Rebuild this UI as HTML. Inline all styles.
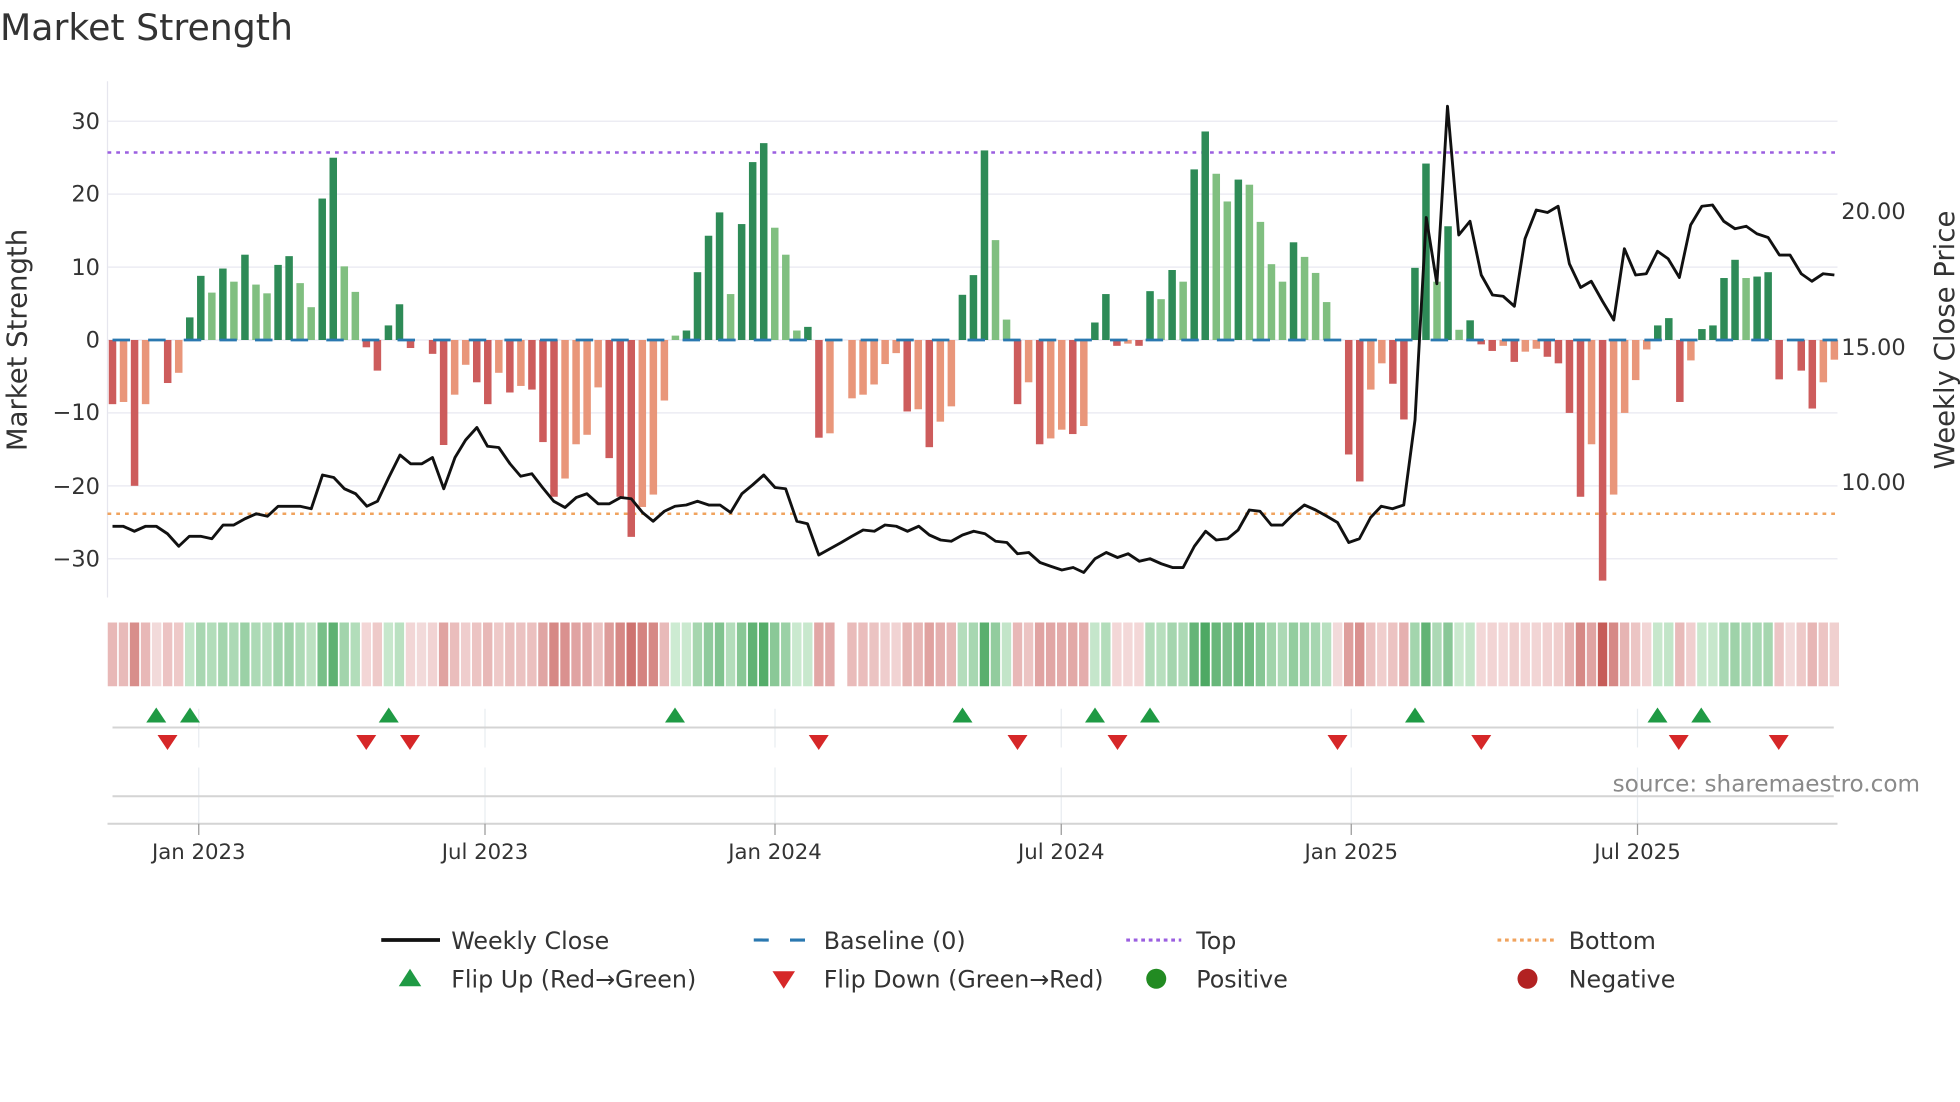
<!DOCTYPE html>
<html><head><meta charset="utf-8"><style>
html,body{margin:0;padding:0;background:#fff;width:1960px;height:1102px;overflow:hidden}
svg{display:block}
text{font-family:"DejaVu Sans","Liberation Sans",sans-serif;fill:#333}
</style></head><body>
<svg id="s" width="1960" height="1102" viewBox="0 0 1568 881.6" xmlns="http://www.w3.org/2000/svg">
<rect width="1568" height="881.6" fill="#fff"/>
<text x="0" y="32" font-size="29" fill="#333">Market Strength</text>
<g id="grid"></g>
<line x1="86" y1="65" x2="86" y2="478" stroke="#e6e6ee" stroke-width="1"/>
<g font-size="18" text-anchor="end">
<text x="80" y="103">30</text><text x="80" y="161">20</text><text x="80" y="220">10</text>
<text x="80" y="278">0</text><text x="80" y="336">−10</text><text x="80" y="395">−20</text><text x="80" y="453">−30</text>
</g>
<g font-size="18">
<text x="1473" y="175">20.00</text><text x="1473" y="284">15.00</text><text x="1473" y="392">10.00</text>
</g>
<text transform="translate(21,272) rotate(-90)" font-size="22" text-anchor="middle">Market Strength</text>
<text transform="translate(1563,272) rotate(-90)" font-size="22" text-anchor="middle">Weekly Close Price</text>
<line x1="86" y1="122" x2="1470" y2="122" stroke="#9b5fe0" stroke-width="2" stroke-dasharray="3,4"/>
<line x1="86" y1="411" x2="1470" y2="411" stroke="#f0a35e" stroke-width="2" stroke-dasharray="3,4"/>
<g id="bars"></g>
<line x1="90" y1="272" x2="1470" y2="272" stroke="#2a78b0" stroke-width="2.2" stroke-dasharray="14,14.5"/>
<polyline id="price" fill="none" stroke="#111" stroke-width="2.3" stroke-linejoin="round"/>
<g id="heat"></g>
<g id="vg" stroke="#e8ecf0" stroke-width="1"></g>
<line x1="90" y1="582" x2="1467" y2="582" stroke="#d4d4d4" stroke-width="1.6"/>
<line x1="90" y1="637" x2="1467" y2="637" stroke="#d4d4d4" stroke-width="1.6"/>
<line x1="86" y1="659" x2="1470" y2="659" stroke="#d4d4d4" stroke-width="1.6"/>
<g id="marks"></g>
<g font-size="17" text-anchor="middle" fill="#333">
<text x="159" y="687">Jan 2023</text><text x="388" y="687">Jul 2023</text><text x="620" y="687">Jan 2024</text>
<text x="849" y="687">Jul 2024</text><text x="1081" y="687">Jan 2025</text><text x="1310" y="687">Jul 2025</text>
</g>
<text x="1536" y="633" font-size="18.5" text-anchor="end" style="fill:#8a8a8a">source: sharemaestro.com</text>
<g font-size="19">
<line x1="305" y1="752" x2="352" y2="752" stroke="#111" stroke-width="3"/>
<text x="361" y="759">Weekly Close</text>
<line x1="603" y1="752" x2="647" y2="752" stroke="#2a78b0" stroke-width="2.5" stroke-dasharray="12,17"/>
<text x="659" y="759">Baseline (0)</text>
<line x1="901" y1="752" x2="945" y2="752" stroke="#9b5fe0" stroke-width="2.5" stroke-dasharray="3,3"/>
<text x="957" y="759">Top</text>
<line x1="1198" y1="752" x2="1243" y2="752" stroke="#f0a35e" stroke-width="2.5" stroke-dasharray="3,3"/>
<text x="1255" y="759">Bottom</text>
<polygon points="319,789 337,789 328,775" fill="#1f9a44"/>
<text x="361" y="790">Flip Up (Red→Green)</text>
<polygon points="618,777 636,777 627,791" fill="#d62728"/>
<text x="659" y="790">Flip Down (Green→Red)</text>
<circle cx="925" cy="783" r="8" fill="#228b22"/>
<text x="957" y="790">Positive</text>
<circle cx="1222" cy="783" r="8" fill="#b22222"/>
<text x="1255" y="790">Negative</text>
</g>
</svg>
<script>
var NS="http://www.w3.org/2000/svg";
function el(p,t,a){var e=document.createElementNS(NS,t);for(var k in a)e.setAttribute(k,a[k]);p.appendChild(e);return e;}
var g=document.getElementById("grid");
[-30,-20,-10,0,10,20,30].forEach(function(v){var y=272-v*5.833;el(g,"line",{x1:86,x2:1470,y1:y,y2:y,stroke:"#ececf3","stroke-width":1.2});});
var S="-8.8d,-8.5l,-20d,-8.8l,0,-5.9d,-4.5l,3.1d,8.8d,6.5l,9.8d,8l,11.7d,7.6l,6.4l,10.3d,11.5d,7.8l,4.5l,19.4d,25d,10.1l,6.6l,-1d,-4.2d,2d,4.9d,-1.1d,0,-1.9d,-14.4d,-7.5l,-3.4l,-5.8d,-8.8d,-4.5l,-7.2d,-6.3l,-6.8d,-14d,-21.5d,-19l,-14.3l,-13l,-6.5l,-16.2d,-21.5d,-27d,-22.9l,-21.2l,-8.3l,0.6l,1.3d,9.3d,14.3d,17.5d,6.3l,15.9d,24.4d,27d,15.4l,11.7l,1.3l,1.8d,-13.4d,-12.8l,0,-8l,-7.5l,-6.1l,-3.3l,-1.8l,-9.8d,-9.5l,-14.7d,-11.2l,-9.1l,6.2d,8.9d,26d,13.7l,2.8l,-8.8d,-5.8l,-14.3d,-13.5l,-12.3l,-12.9d,-11.8l,2.4d,6.3d,-0.8d,-0.5l,-0.8d,6.7d,5.6l,9.6d,8l,23.4d,28.6d,22.8l,19l,22d,21.3l,16.2l,10.4l,8l,13.4d,11.4l,9.2l,5.2l,0,-15.7d,-19.4d,-6.8l,-3.2l,-6d,-10.9d,9.9d,24.2d,8l,15.6d,1.4l,2.7d,-0.6d,-1.5d,-0.8l,-3d,-1.6l,-1.2l,-2.3d,-3.2d,-10d,-21.5d,-14.3l,-33d,-21.2l,-10l,-5.5l,-1.3l,2d,3d,-8.5d,-2.8l,1.5d,2d,8.5d,11d,8.5l,8.7d,9.3d,-5.4d,0,-4.2d,-9.4d,-5.8l,-2.7l".split(",");
var n=S.length, step=(1467.5-90)/(n-1);
var bars=document.getElementById("bars"), heat=document.getElementById("heat");
function mix(a,b,t){return "rgb("+[0,1,2].map(function(i){return Math.round(a[i]+(b[i]-a[i])*t)}).join(",")+")";}
S.forEach(function(s,i){
  var v=parseFloat(s), d=s.indexOf("d")>=0, x=90+i*step;
  if(v!==0){
    var y0=272, y1=272-v*5.833;
    var col = v>0 ? (d?"#2e8b57":"#80bf80") : (d?"#cd5c5c":"#e9967a");
    el(bars,"rect",{x:x-3,y:Math.min(y0,y1),width:6,height:Math.abs(y1-y0),fill:col});
  }
  var c;
  if(v>0) c=mix([208,236,212],[76,168,98],Math.min(v/29,1));
  else if(v<0) c=mix([244,218,218],[198,92,88],Math.min(-v/33,1));
  else c= i===66?"#ffffff":"#f2dada";
  el(heat,"rect",{x:x-3.8,y:498,width:7.5,height:51,fill:c});
});
var P=[[90,421],[98.5,421],[107.5,425],[116.5,421],[125,421],[134,427],[143,437],[151.5,429],[160.5,429],[169.5,431],[178.5,420],[187,420],[196,415],[205,411],[214,413],[222.5,405],[231.5,405],[240,405],[249,407],[258,380],[267,382],[275.5,391],[284.5,395],[293.5,405],[302,401],[311,382],[320,364],[328.5,371],[337.5,371],[346,366],[355,391],[364,366],[372.5,352],[381.5,342],[390,357],[399,358],[408,371],[416.5,381],[425.5,379],[434,390],[443,401],[452,406],[461,398],[469.5,395],[478.5,403],[487.5,403],[496.5,398],[505,399],[514,410],[522.5,417],[531.5,409],[540,405],[549,404],[558,401],[567,404],[576,404],[584.5,410],[593.5,395],[602,388],[611,380],[620,390],[628.5,391],[637.5,417],[646,419],[655,444],[664,439],[673,434],[681.5,429],[690.5,424],[699.5,425],[708,420],[717,421],[726,425],[735,421],[743.5,428],[752.5,432],[761,433],[770,428],[779,425],[788,427],[796.5,433],[805.5,434],[814,443],[823,442],[832,450],[840.5,453],[849.5,456],[858.5,454],[867,458],[876,447],[885,442],[894,446],[902.5,443],[911.5,449],[920,447],[929,451],[938,454],[946.5,454],[955.5,437],[964.5,425],[973,432],[982,431],[990.5,424],[999.5,408],[1008,409],[1017,420],[1026,420],[1035,411],[1043.5,404],[1052.5,408],[1061.5,413],[1070,418],[1079,434],[1087.5,431],[1096.5,414],[1105,405],[1114,407],[1123,404],[1132,336],[1141,174],[1149.5,227],[1158,85],[1167,188],[1176,177],[1185,220],[1194,236],[1202.5,237],[1211.5,245],[1220,191],[1229,168],[1238,170],[1246.5,165],[1255.5,211],[1264.5,230],[1273,225],[1282,241],[1291,256],[1299.5,199],[1308.5,220],[1317,219],[1326,201],[1334.5,207],[1343.5,222],[1352.5,180],[1361.5,165],[1370,164],[1379,177],[1388,183],[1397,181],[1405.5,187],[1414.5,190],[1423.5,204],[1432,204],[1441,219],[1449.5,225],[1458.5,219],[1467.5,220]];
document.getElementById("price").setAttribute("points",P.map(function(p){return p.join(",")}).join(" "));
var vg=document.getElementById("vg");
[159,388,620,849,1081,1310].forEach(function(x){
  el(vg,"line",{x1:x,x2:x,y1:567,y2:598});
  el(vg,"line",{x1:x,x2:x,y1:614,y2:659});
  el(document.getElementById("s"),"line",{x1:x,x2:x,y1:659,y2:668,stroke:"#999","stroke-width":1});
});
var m=document.getElementById("marks");
[125,152,311,540,770,876,920,1132,1326,1361].forEach(function(x){
  el(m,"polygon",{points:(x-8)+",578 "+(x+8)+",578 "+x+",566",fill:"#1f9a44"});});
[134,293,328,655,814,894,1070,1185,1343,1423].forEach(function(x){
  el(m,"polygon",{points:(x-8)+",588 "+(x+8)+",588 "+x+",600",fill:"#d62728"});});
</script>
</body></html>
